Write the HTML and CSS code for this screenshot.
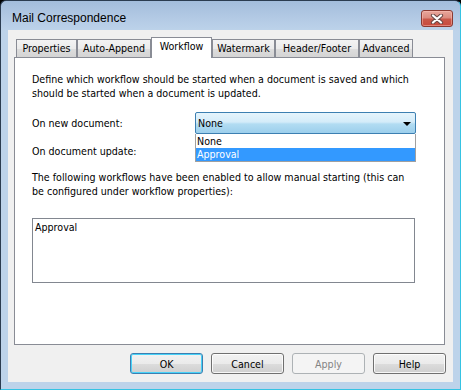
FILE: index.html
```html
<!DOCTYPE html>
<html>
<head>
<meta charset="utf-8">
<title>Mail Correspondence</title>
<link rel="stylesheet" href="styles.css">
</head>
<body>
<div class="window">
  <div class="titlebar">
    <span class="title">Mail Correspondence</span>
    <div class="close">
      <svg width="14" height="10" viewBox="0 0 14 10">
        <path d="M3 1.5 L11 8.5 M11 1.5 L3 8.5" stroke="#6b4a48" stroke-width="4.2" stroke-linecap="round" fill="none"/>
        <path d="M3 1.5 L11 8.5 M11 1.5 L3 8.5" stroke="#ffffff" stroke-width="2.2" stroke-linecap="round" fill="none"/>
      </svg>
    </div>
  </div>
  <div class="content">
    <div class="tabs">
      <div class="tab tab-properties">Properties</div>
      <div class="tab tab-append">Auto-Append</div>
      <div class="tab tab-workflow active">Workflow</div>
      <div class="tab tab-watermark">Watermark</div>
      <div class="tab tab-header">Header/Footer</div>
      <div class="tab tab-advanced">Advanced</div>
    </div>
    <div class="panel">
      <p class="desc">Define which workflow should be started when a document is saved and which<br>should be started when a document is updated.</p>
      <div class="row row-first">
        <span class="label">On new document:</span>
        <div class="combo-wrap">
          <div class="combo pressed">
            <span class="combo-text">None</span>
            <span class="arrow"></span>
          </div>
          <div class="dropdown">
            <div class="option">None</div>
            <div class="option selected">Approval</div>
          </div>
        </div>
      </div>
      <div class="row row-second">
        <span class="label">On document update:</span>
        <div class="combo normal">
          <span class="combo-text"></span>
          <span class="arrow"></span>
        </div>
      </div>
      <p class="desc desc-second">The following workflows have been enabled to allow manual starting (this can<br>be configured under workflow properties):</p>
      <div class="listbox">
        <div class="list-item">Approval</div>
      </div>
    </div>
    <div class="buttons">
      <button class="btn default">OK</button>
      <button class="btn">Cancel</button>
      <button class="btn disabled">Apply</button>
      <button class="btn">Help</button>
    </div>
  </div>
</div>
</body>
</html>
```
FILE: styles.css
```css
* {
  box-sizing: border-box;
}

html,
body {
  margin: 0;
  padding: 0;
}

body {
  width: 461px;
  height: 390px;
  overflow: hidden;
  background: #000;
  font-family: "DejaVu Sans Condensed", "DejaVu Sans", sans-serif;
  font-stretch: condensed;
  font-size: 10.6px;
  color: #000;
}

.window {
  width: 461px;
  height: 390px;
  border: 1px solid #2b3c50;
  border-right-color: #35c3e3;
  border-bottom-color: #35c3e3;
  border-radius: 6px 6px 0 0;
  background: linear-gradient(to bottom, #a3bddc 0px, #b2c9e4 16px, #bdd3ea 30px, #bdd3ea 100%);
  padding: 0 7px 7px 7px;
  display: flex;
  flex-direction: column;
}

.titlebar {
  height: 29px;
  display: flex;
  justify-content: space-between;
  align-items: flex-start;
}

.title {
  font-family: "Liberation Sans", Arial, sans-serif;
  font-stretch: normal;
  font-size: 12px;
  line-height: 16px;
  padding: 9px 0 0 4px;
  color: #000;
}

.close {
  width: 32px;
  height: 17px;
  margin-top: 9px;
  border: 1px solid #8a3a32;
  border-radius: 3px;
  background: linear-gradient(to bottom, #e8a79c 0%, #dc8c80 45%, #c95849 55%, #c84a3d 100%);
  box-shadow: inset 0 0 0 1px rgba(255, 200, 190, 0.45);
  display: flex;
  align-items: center;
  justify-content: center;
}

.close svg {
  display: block;
}

.content {
  flex: 1;
  background: #f0f0f0;
  padding: 7px 0 0 6px;
  display: flex;
  flex-direction: column;
}

.tabs {
  display: flex;
  align-items: flex-end;
  height: 20px;
  padding-left: 2px;
  position: relative;
  z-index: 1;
}

.tab {
  height: 18px;
  border: 1px solid #898c95;
  border-bottom: none;
  background: linear-gradient(to bottom, #f3f3f3 0%, #ebebeb 50%, #dddddd 51%, #d4d4d4 100%);
  text-align: center;
  line-height: 14px;
  padding-top: 1px;
  white-space: nowrap;
}

.tab.active {
  height: 21px;
  margin-bottom: -1px;
  background: #fff;
  padding-top: 1px;
}

.tab-properties { width: 61px; }
.tab-append { width: 74px; }
.tab-workflow { width: 61px; }
.tab-watermark { width: 63px; }
.tab-header { width: 84px; }
.tab-advanced { width: 54px; }

.panel {
  width: 431px;
  height: 288px;
  border: 1px solid #898c95;
  background: #fff;
  padding: 14px 17px 0 17px;
}

.desc {
  margin: 0;
  line-height: 14px;
  white-space: nowrap;
}

.desc-second {
  margin-top: 8px;
}

.row {
  display: flex;
  align-items: center;
  line-height: 14px;
}

.row-first {
  margin-top: 12px;
}

.row-second {
  margin-top: 6px;
}

.label {
  width: 163px;
  flex: none;
}

.combo-wrap {
  position: relative;
}

.combo {
  width: 221px;
  height: 22px;
  border-radius: 2px;
  display: flex;
  align-items: center;
  justify-content: space-between;
  padding: 0 4px 0 2px;
}

.combo.pressed {
  border: 1px solid #3c7fb1;
  background: linear-gradient(to bottom, #e5f4fc 0%, #d4ecf9 45%, #b2dcf2 55%, #9ccfec 100%);
}

.combo.normal {
  border: 1px solid #707070;
  background: linear-gradient(to bottom, #f2f2f2 0%, #ebebeb 50%, #dddddd 51%, #cfcfcf 100%);
}

.arrow {
  width: 0;
  height: 0;
  border-left: 4px solid transparent;
  border-right: 4px solid transparent;
  border-top: 4px solid #000;
  margin-top: 1px;
}

.dropdown {
  position: absolute;
  top: 22px;
  left: 0;
  width: 221px;
  height: 28px;
  border: 1px solid #a0a0a0;
  border-top: none;
  background: #fff;
  padding-top: 1px;
  z-index: 2;
}

.option {
  height: 13px;
  line-height: 13px;
  padding-left: 1px;
}

.option.selected {
  background: #3399ff;
  color: #fff;
}

.listbox {
  width: 383px;
  height: 65px;
  margin-top: 20px;
  border: 1px solid #828790;
  padding: 1px 2px;
  line-height: 14px;
}

.buttons {
  display: flex;
  justify-content: flex-end;
  gap: 8px;
  margin-top: 8px;
  padding-right: 7px;
}

.btn {
  width: 73px;
  height: 21px;
  padding: 0;
  border: 1px solid #707070;
  border-radius: 3px;
  background: linear-gradient(to bottom, #f2f2f2 0%, #ebebeb 50%, #dddddd 51%, #cfcfcf 100%);
  box-shadow: inset 0 0 0 1px rgba(255, 255, 255, 0.8);
  font-family: inherit;
  font-stretch: condensed;
  font-size: 10.6px;
  color: #000;
  line-height: 14px;
}

.btn.default {
  border-color: #3c7fb1;
  box-shadow: inset 0 0 0 1px #48d2f8;
}

.btn.disabled {
  border-color: #adb2b5;
  background: #f4f4f4;
  box-shadow: none;
  color: #838383;
}
```
